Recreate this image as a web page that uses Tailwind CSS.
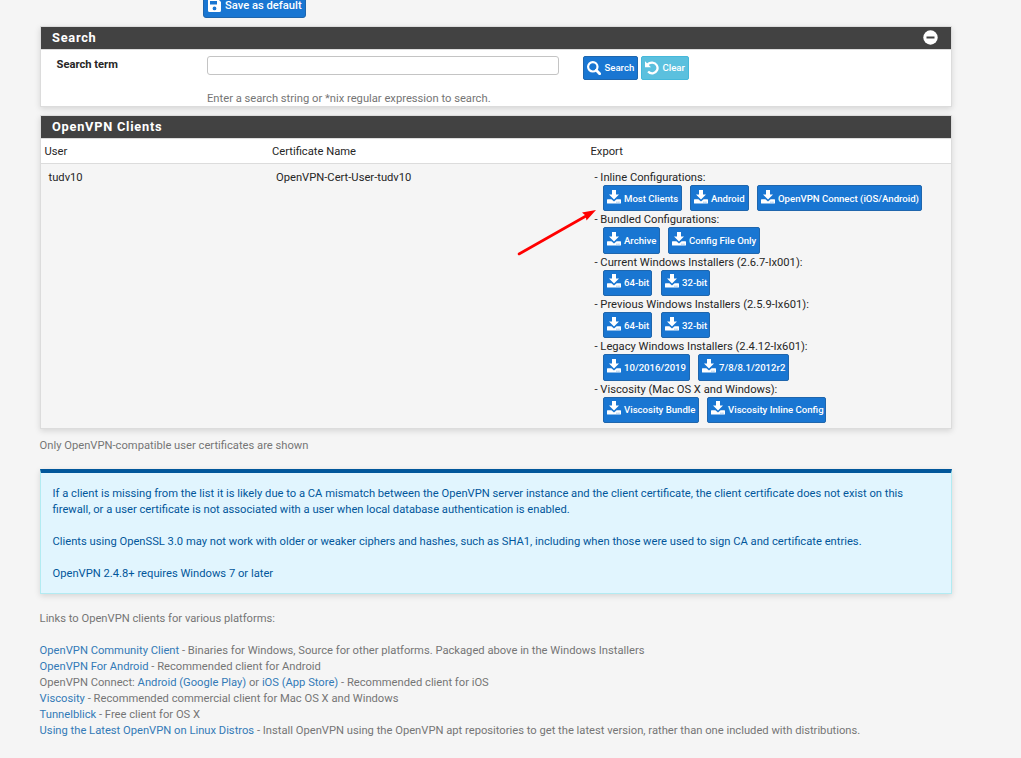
<!DOCTYPE html>
<html lang="en">
<head>
<meta charset="utf-8">
<title>OpenVPN Client Export</title>
<script src="https://cdn.jsdelivr.net/npm/@tailwindcss/browser@4"></script>
</head>
<body class="bg-[#f5f5f5] font-[Roboto,sans-serif] text-[11.2px] leading-4 text-[#262626] h-[758px] overflow-hidden relative whitespace-nowrap">
<svg class="hidden">
  <symbol id="dl" viewBox="0 0 14 14"><path fill="currentColor" fill-rule="evenodd" d="M5 0h4v4.600h3L7 9.600 2 4.600h3zM.6 9.200h3.800L7 11.500l2.600-2.300h3.800q.6 0 .6.6v3.100q0 .6-.6.6H.6q-.6 0-.6-.6V9.800q0-.6.6-.6zM9.500 11.700v.9h.9v-.9zm2 0v.9h.9v-.9z"/></symbol>
</svg>
<main class="ml-10 w-[912px] flex flex-col">
  <div class="h-[26px] pl-[163px]">
    <button class="-mt-[8px] flex h-[26px] w-[103px] items-center rounded-[3px] border border-[#1f66ad] bg-[#1976d2] pl-[4px] font-medium text-white">
      <svg class="mr-[4px] w-[13px] h-[13px]" viewBox="0 0 13 13"><path fill="currentColor" fill-rule="evenodd" d="M1.500 0H10l3 3v8.500A1.500 1.500 0 0 1 11.500 13h-10A1.500 1.500 0 0 1 0 11.500v-10A1.500 1.500 0 0 1 1.500 0zM2 2v3.500h7V2zM6.500 7.500a1.900 1.900 0 1 0 0 3.800 1.900 1.900 0 0 0 0-3.800z"/></svg>
      <span class="pt-0.5">Save as default</span>
    </button>
  </div>

  <section class="h-[81px] border border-[#dcdcdc] bg-white shadow-[0_2px_6px_rgba(0,0,0,0.13)]">
    <h2 class="flex h-[22px] items-center justify-between bg-[#424242] pl-[11px] pr-[13px] text-[12.8px] font-bold tracking-[0.75px] text-white">
      <span>Search</span>
      <svg class="w-[15px] h-[15px] -mt-px" viewBox="0 0 15 15"><circle cx="7.500" cy="7.500" r="7.200" fill="#fff"/><rect x="3.500" y="6.500" width="8" height="2" fill="#424242"/></svg>
    </h2>
    <div class="flex border-t border-[#dcdcdc] pt-[6px]">
      <div class="w-[166px] pl-[15.500px] pt-[1px] font-bold"><span>Search term</span></div>
      <div class="w-[376px]">
        <input class="block h-[19px] w-[352px] rounded-[3px] border border-[#c4c4c4] bg-white">
        <p class="mt-[16px] text-[#757575]">Enter a search string or *nix regular expression to search.</p>
      </div>
      <div class="flex h-6 gap-[3px] text-[9.6px] font-medium text-white">
        <button class="flex h-6 w-[55px] items-center rounded-[2px] border border-[#1f66ad] bg-[#1976d2] pl-[3px]">
          <svg class="mr-[3.500px] w-[14px] h-[14px]" viewBox="0 0 14 14" fill="none" stroke="currentColor"><circle cx="5.800" cy="5.800" r="4.700" stroke-width="2.200"/><path d="M9.300 9.300l3.400 3.400" stroke-width="2.800" stroke-linecap="round"/></svg><span>Search</span>
        </button>
        <button class="flex h-6 w-[48px] items-center rounded-[2px] border border-[#46b8da] bg-[#5bc0de] pl-[3px]">
          <svg class="mr-[3.500px] w-[14px] h-[14px]" viewBox="0 0 14 14" fill="none" stroke="currentColor"><path d="M2 4.200C3.500 2.100 5.500 1.500 7.400 1.600a5.400 5.400 0 1 1-4.300 9" stroke-width="2.300"/><path fill="currentColor" stroke="none" d="M0 .2v6h6z"/></svg><span>Clear</span>
        </button>
      </div>
    </div>
  </section>

  <section class="mt-2 h-[314px] border border-[#dcdcdc] shadow-[0_2px_6px_rgba(0,0,0,0.13)] bg-[#f5f5f5]">
    <h2 class="flex h-[22px] items-center bg-[#424242] pl-[11px] text-[12.8px] font-bold tracking-[0.75px] text-white"><span>OpenVPN Clients</span></h2>
    <div class="flex h-[26px] items-center border-y border-[#dcdcdc] bg-white pt-[2px]">
      <div class="w-[231px] pl-[3.500px]"><span>User</span></div>
      <div class="w-[318.500px]"><span>Certificate Name</span></div>
      <div><span>Export</span></div>
    </div>
    <div class="flex pt-[5px]">
      <div class="w-[235px] pl-[7.500px] pt-px"><span>tudv10</span></div>
      <div class="w-[318px] pt-px"><span>OpenVPN-Cert-User-tudv10</span></div>
      <div>
        <p class="h-4 pt-px pl-[0.500px]"><span>- Inline Configurations:</span></p>
        <div class="flex gap-2 pl-[9px] h-[26.33px] text-[9.6px] font-medium text-white">
          <button class="flex w-[79px] items-center rounded-[2px] border border-[#1f66ad] bg-[#1976d2] pl-[3px]"><svg class="mr-[3px] -mt-[3px] w-[14px] h-[14px]"><use href="#dl"/></svg><span class="pt-px">Most Clients</span></button>
          <button class="flex w-[59px] items-center rounded-[2px] border border-[#1f66ad] bg-[#1976d2] pl-[3px]"><svg class="mr-[3px] -mt-[3px] w-[14px] h-[14px]"><use href="#dl"/></svg><span class="pt-px">Android</span></button>
          <button class="flex w-[165px] items-center rounded-[2px] border border-[#1f66ad] bg-[#1976d2] pl-[3px]"><svg class="mr-[3px] -mt-[3px] w-[14px] h-[14px]"><use href="#dl"/></svg><span class="pt-px">OpenVPN Connect (iOS/Android)</span></button>
        </div>
        <p class="h-4 pt-px pl-[0.500px]"><span>- Bundled Configurations:</span></p>
        <div class="flex gap-2 pl-[9px] h-[26.33px] text-[9.6px] font-medium text-white">
          <button class="flex w-[57px] items-center rounded-[2px] border border-[#1f66ad] bg-[#1976d2] pl-[3px]"><svg class="mr-[3px] -mt-[3px] w-[14px] h-[14px]"><use href="#dl"/></svg><span class="pt-px">Archive</span></button>
          <button class="flex w-[92px] items-center rounded-[2px] border border-[#1f66ad] bg-[#1976d2] pl-[3px]"><svg class="mr-[3px] -mt-[3px] w-[14px] h-[14px]"><use href="#dl"/></svg><span class="pt-px">Config File Only</span></button>
        </div>
        <p class="h-4 pt-px pl-[0.500px]"><span>- Current Windows Installers (2.6.7-Ix001):</span></p>
        <div class="flex gap-[9px] pl-[9px] h-[26.33px] text-[9.6px] font-medium text-white">
          <button class="flex w-[49px] items-center rounded-[2px] border border-[#1f66ad] bg-[#1976d2] pl-[3px]"><svg class="mr-[3px] -mt-[3px] w-[14px] h-[14px]"><use href="#dl"/></svg><span class="pt-px">64-bit</span></button>
          <button class="flex w-[49px] items-center rounded-[2px] border border-[#1f66ad] bg-[#1976d2] pl-[3px]"><svg class="mr-[3px] -mt-[3px] w-[14px] h-[14px]"><use href="#dl"/></svg><span class="pt-px">32-bit</span></button>
        </div>
        <p class="h-4 pt-px pl-[0.500px]"><span>- Previous Windows Installers (2.5.9-Ix601):</span></p>
        <div class="flex gap-[9px] pl-[9px] h-[26.33px] text-[9.6px] font-medium text-white">
          <button class="flex w-[49px] items-center rounded-[2px] border border-[#1f66ad] bg-[#1976d2] pl-[3px]"><svg class="mr-[3px] -mt-[3px] w-[14px] h-[14px]"><use href="#dl"/></svg><span class="pt-px">64-bit</span></button>
          <button class="flex w-[49px] items-center rounded-[2px] border border-[#1f66ad] bg-[#1976d2] pl-[3px]"><svg class="mr-[3px] -mt-[3px] w-[14px] h-[14px]"><use href="#dl"/></svg><span class="pt-px">32-bit</span></button>
        </div>
        <p class="h-4 pt-px pl-[0.500px]"><span>- Legacy Windows Installers (2.4.12-Ix601):</span></p>
        <div class="flex gap-2 pl-[9px] h-[26.33px] text-[9.6px] font-medium text-white">
          <button class="flex w-[87px] items-center rounded-[2px] border border-[#1f66ad] bg-[#1976d2] pl-[3px]"><svg class="mr-[3px] -mt-[3px] w-[14px] h-[14px]"><use href="#dl"/></svg><span class="pt-px">10/2016/2019</span></button>
          <button class="flex w-[91px] items-center rounded-[2px] border border-[#1f66ad] bg-[#1976d2] pl-[3px]"><svg class="mr-[3px] -mt-[3px] w-[14px] h-[14px]"><use href="#dl"/></svg><span class="pt-px">7/8/8.1/2012r2</span></button>
        </div>
        <p class="h-4 pt-px pl-[0.500px]"><span>- Viscosity (Mac OS X and Windows):</span></p>
        <div class="flex gap-2 pl-[9px] h-[26.33px] text-[9.6px] font-medium text-white">
          <button class="flex w-[96px] items-center rounded-[2px] border border-[#1f66ad] bg-[#1976d2] pl-[3px]"><svg class="mr-[3px] -mt-[3px] w-[14px] h-[14px]"><use href="#dl"/></svg><span class="pt-px">Viscosity Bundle</span></button>
          <button class="flex w-[119px] items-center rounded-[2px] border border-[#1f66ad] bg-[#1976d2] pl-[3px]"><svg class="mr-[3px] -mt-[3px] w-[14px] h-[14px]"><use href="#dl"/></svg><span class="pt-px">Viscosity Inline Config</span></button>
        </div>
      </div>
    </div>
  </section>

  <p class="mt-[9px] -ml-[0.400px] text-[#757575]">Only OpenVPN-compatible user certificates are shown</p>

  <section class="mt-[15px] h-[125px] border border-t-4 border-[#b2ebf2] border-t-[#01579b] bg-[#e1f5fe] pl-[11.500px] pt-[13px] text-[#01579b] shadow-[0_2px_6px_rgba(0,0,0,0.13)]">
    <p>If a client is missing from the list it is likely due to a CA mismatch between the OpenVPN server instance and the client certificate, the client certificate does not exist on this<br>firewall, or a user certificate is not associated with a user when local database authentication is enabled.</p>
    <p class="mt-4">Clients using OpenSSL 3.0 may not work with older or weaker ciphers and hashes, such as SHA1, including when those were used to sign CA and certificate entries.</p>
    <p class="mt-4">OpenVPN 2.4.8+ requires Windows 7 or later</p>
  </section>

  <section class="mt-[17px] -ml-[0.400px] text-[#757575]">
    <p>Links to OpenVPN clients for various platforms:</p>
    <ul class="mt-4">
      <li><a class="text-[#337ab7]">OpenVPN Community Client</a> - Binaries for Windows, Source for other platforms. Packaged above in the Windows Installers</li>
      <li><a class="text-[#337ab7]">OpenVPN For Android</a> - Recommended client for Android</li>
      <li>OpenVPN Connect: <a class="text-[#337ab7]">Android (Google Play)</a> or <a class="text-[#337ab7]">iOS (App Store)</a> - Recommended client for iOS</li>
      <li><a class="text-[#337ab7]">Viscosity</a> - Recommended commercial client for Mac OS X and Windows</li>
      <li><a class="text-[#337ab7]">Tunnelblick</a> - Free client for OS X</li>
      <li><a class="text-[#337ab7]">Using the Latest OpenVPN on Linux Distros</a> - Install OpenVPN using the OpenVPN apt repositories to get the latest version, rather than one included with distributions.</li>
    </ul>
  </section>
</main>
<svg class="absolute left-[510px] top-[200px] w-[100px] h-[60px]" viewBox="510 200 100 60"><path d="M519 254L586 216" stroke="#f00" stroke-width="2.600" stroke-linecap="round"/><path d="M596 210L582 212.500L585.500 215.500L586.500 220.500z" fill="#f00"/></svg>
</body>
</html>
